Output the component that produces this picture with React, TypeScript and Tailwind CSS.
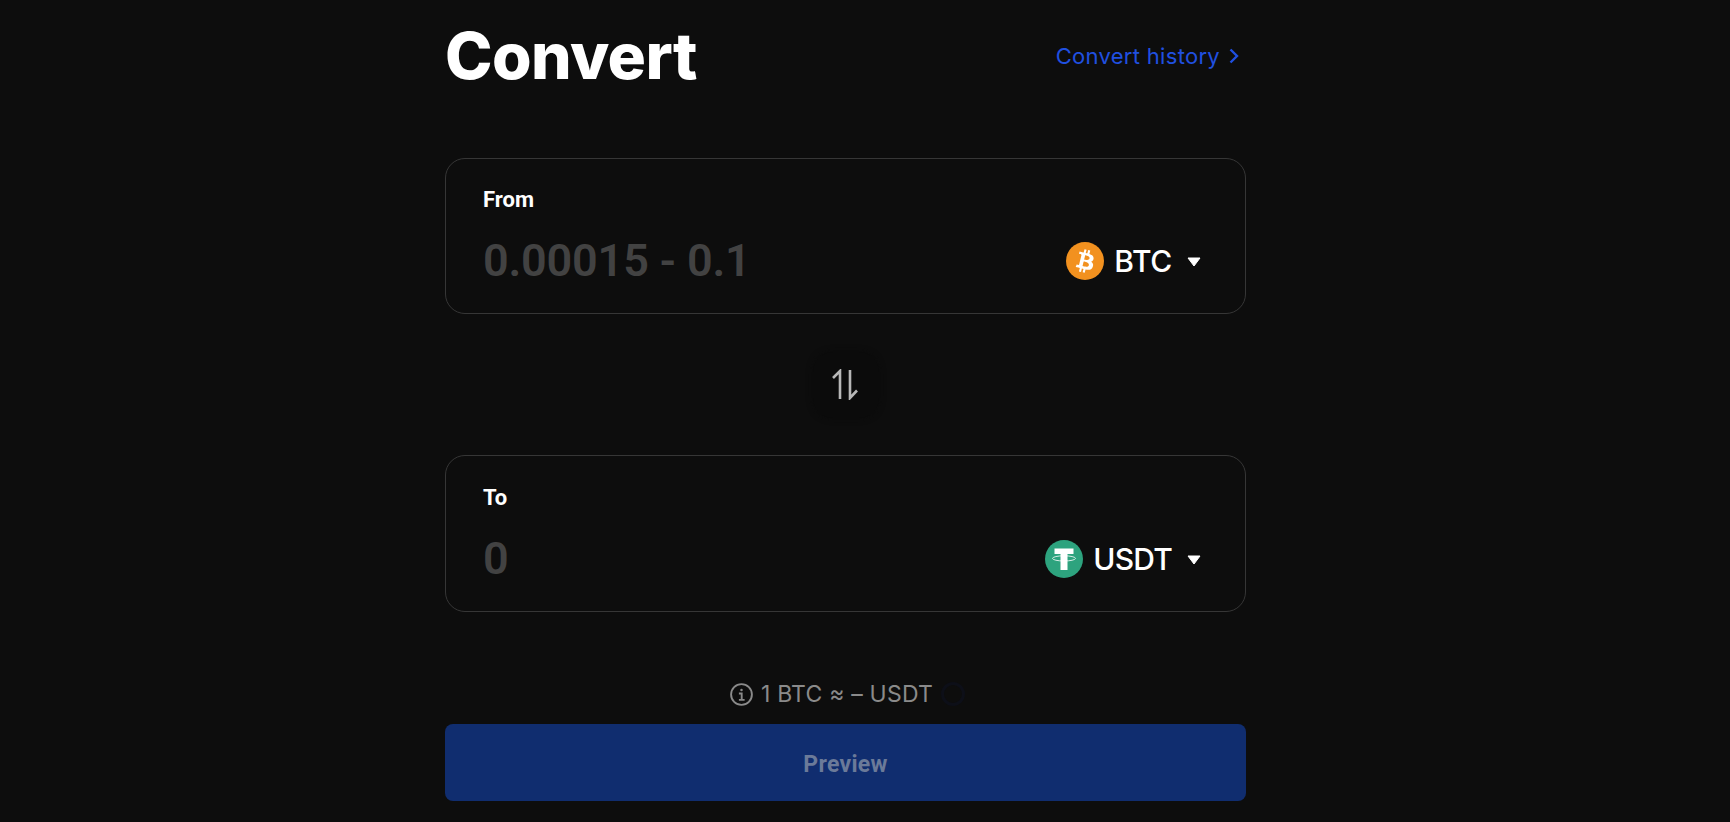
import React from "react";

function Caret() {
  return (
    <svg width="14" height="10" viewBox="0 0 14 10" className="ml-[15px] mt-[1px]">
      <path d="M1 1h12L7 9z" fill="#fff" stroke="#fff" strokeWidth="1" strokeLinejoin="round" />
    </svg>
  );
}

function BtcIcon() {
  return (
    <svg width="38" height="38" viewBox="0 0 32 32">
      <circle cx="16" cy="16" r="16" fill="#F2911F" />
      <path
        fill="#fff"
        d="M23.189 14.02c.314-2.096-1.283-3.223-3.465-3.975l.708-2.84-1.728-.43-.69 2.765c-.454-.114-.92-.22-1.385-.326l.695-2.783L15.596 6l-.708 2.839c-.376-.086-.746-.17-1.104-.26l.002-.009-2.384-.595-.46 1.846s1.283.294 1.256.312c.7.175.826.638.805 1.006l-.806 3.235c.048.012.11.03.18.057l-.183-.045-1.13 4.532c-.086.212-.303.531-.793.41.018.025-1.256-.313-1.256-.313l-.858 1.978 2.25.561c.418.105.828.215 1.231.318l-.715 2.872 1.727.43.708-2.84c.472.127.93.245 1.378.357l-.706 2.828 1.728.43.715-2.866c2.948.558 5.164.333 6.097-2.333.752-2.146-.037-3.385-1.588-4.192 1.13-.26 1.98-1.003 2.207-2.538zm-3.95 5.538c-.533 2.147-4.148.986-5.32.695l.95-3.805c1.172.293 4.929.872 4.37 3.11zm.535-5.569c-.487 1.953-3.495.96-4.47.717l.86-3.45c.975.243 4.118.696 3.61 2.733z"
      />
    </svg>
  );
}

function UsdtIcon() {
  return (
    <svg width="38" height="38" viewBox="0 0 38 38">
      <circle cx="19" cy="19" r="19" fill="#2DA37E" />
      <path d="M9.5 8.5h19v5.4h-6V30h-7V13.9h-6z" fill="#fff" />
      <ellipse cx="19" cy="18.4" rx="11.5" ry="2.6" fill="none" stroke="#fff" strokeOpacity="0.8" strokeWidth="1" />
    </svg>
  );
}

function Card({
  label,
  value,
  icon,
  code,
  className,
  codeClass,
}: {
  label: string;
  value: string;
  icon: React.ReactNode;
  code: string;
  className: string;
  codeClass: string;
}) {
  return (
    <div className={`rounded-[20px] border border-[#363636] px-[37px] ${className}`}>
      <div className="text-[22px] leading-[26px] font-bold text-white font-['Roboto',sans-serif]">{label}</div>
      <div className="mt-[21px] flex h-[54px] items-center justify-between">
        <span className="text-[45px] tracking-[-0.2px] font-semibold leading-[54px] text-[#424242] font-['Roboto',sans-serif]">{value}</span>
        <div className="flex items-center pr-[7px]">
          {icon}
          <span className={`ml-[10px] text-[30px] leading-[38px] font-medium text-white font-['Inter',sans-serif] ${codeClass}`}>{code}</span>
          <Caret />
        </div>
      </div>
    </div>
  );
}

export default function App() {
  return (
    <div className="h-[822px] overflow-hidden bg-[#0d0d0d]">
      <div className="ml-[445px] w-[801px]">
        <div className="flex h-[112px] items-center justify-between">
          <h1 className="text-[64px] font-extrabold tracking-[-0.6px] leading-[78px] text-white font-['Inter',sans-serif]">Convert</h1>
          <a className="flex items-center text-[22px] tracking-[0.3px] leading-[28px] text-[#2050e0] font-['Inter',sans-serif]">
            Convert history
            <svg width="12" height="18" viewBox="0 0 12 18" fill="none" className="ml-[8px] mr-[6px]">
              <path d="M2.5 2.5 9 9l-6.5 6.5" stroke="#2050e0" strokeWidth="2.4" />
            </svg>
          </a>
        </div>
        <Card
          className="mt-[46px] h-[156px] pt-[28px]"
          codeClass="tracking-[-0.3px]"
          label="From"
          value="0.00015 - 0.1"
          icon={<BtcIcon />}
          code="BTC"
        />
        <div className="flex h-[141px] items-center justify-center">
          <div className="flex h-[66px] w-[66px] items-center justify-center rounded-[20px] bg-[#0b0b0b] shadow-[0_0_6px_#0b0b0b]">
            <svg width="26" height="31" viewBox="0 0 26 31" fill="none" stroke="#b8b8b8" strokeWidth="2.6" className="-ml-[2px]">
              <path d="M1 9 8 2v28" />
              <path d="M18 1v28l7-7.5" />
            </svg>
          </div>
        </div>
        <Card
          className="h-[157px] pt-[29px]"
          codeClass="tracking-[-0.8px]"
          label="To"
          value="0"
          icon={<UsdtIcon />}
          code="USDT"
        />
        <div className="mt-[67px] flex h-[30px] items-center justify-center pl-[3px] text-[23px] tracking-[0.2px] leading-[30px] text-[#8a8a8a] font-['Inter',sans-serif]">
          <svg width="25" height="25" viewBox="0 0 24 24" fill="none" stroke="#8a8a8a" strokeWidth="1.8" className="mr-[7px]">
            <circle cx="12" cy="12" r="10" />
            <circle cx="12" cy="7.6" r="1.2" fill="#8a8a8a" stroke="none" />
            <path d="M9.5 11H12.2V17M9.5 17.2H15" />
          </svg>
          <span>1 BTC ≈ – USDT</span>
          <span className="ml-[8px] h-[24px] w-[24px] rounded-full border-[3px] border-[#0d0f18]" />
        </div>
        <button className="mt-[15px] flex h-[77px] w-full items-center justify-center rounded-[8px] bg-[#102d6f] pt-[6px] text-[23px] tracking-[0.3px] font-bold text-[#6b7a99] font-['Roboto',sans-serif]">
          Preview
        </button>
      </div>
    </div>
  );
}
